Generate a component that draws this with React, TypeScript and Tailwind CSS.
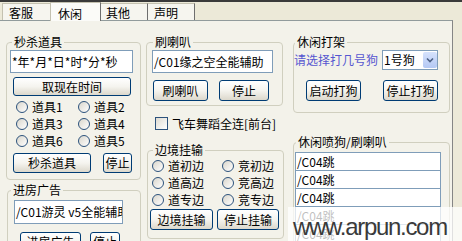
import React from 'react'

const font = "font-['Noto_Sans_CJK_SC',sans-serif]"

function Btn({ label, className }: { label: string; className: string }) {
  return (
    <button
      className={`flex shrink-0 items-center justify-center rounded-[3px] border border-[#003c74] bg-linear-to-b from-white via-[#f5f4ef] to-[#dcd8cc] text-[12px] leading-none text-black ${className}`}
    >
      {label}
    </button>
  )
}

function Radio({ label, className }: { label: string; className: string }) {
  return (
    <div className={`flex h-[17px] items-center ${className}`}>
      <span className="h-[12px] w-[12px] shrink-0 rounded-full border border-[#2c527c] bg-linear-to-br from-[#d9d6cc] to-white" />
      <span className="ml-[4px] text-[12px] leading-[17px] text-black">{label}</span>
    </div>
  )
}

function Group({ title, className, legendClass, children }: { title: string; className: string; legendClass: string; children: React.ReactNode }) {
  return (
    <fieldset className={`shrink-0 rounded-[4px] border border-[#d0cfbf] ${className}`}>
      <legend className={`px-[2px] text-[12px] leading-[14px] text-black ${legendClass}`}>{title}</legend>
      {children}
    </fieldset>
  )
}

function TextBox({ text, className }: { text: string; className: string }) {
  return (
    <div className={`flex items-center overflow-hidden whitespace-nowrap border border-[#7f9db9] bg-white pl-[1px] text-[12px] text-black ${className}`}>
      {text}
    </div>
  )
}

export default function App() {
  return (
    <div className={`relative h-[241px] w-[462px] overflow-hidden bg-[#ece9d8] ${font}`}>
      <div className="h-[2px] bg-[#3a3a3a]" />

      {/* Tabs */}
      <div className="relative z-10 flex h-[18px] items-end pl-[2px] text-[12px] text-black">
        <div className="h-[17px] w-[48px] border-l border-t border-[#c4c1b0] bg-[#f6f5ef] pl-[6px] pt-[2px] leading-[14px]">客服</div>
        <div className="-mb-px h-[19px] w-[51px] border-r border-t border-l border-[#c4c1b0] border-r-[#6e6e6e] bg-[#fbfbf8] pl-[7px] pt-[4px] leading-[14px]">休闲</div>
        <div className="h-[17px] w-[47px] border-r border-t border-[#c4c1b0] border-r-[#6e6e6e] bg-[#f6f5ef] pl-[5px] pt-[2px] leading-[14px]">其他</div>
        <div className="h-[17px] w-[47px] border-r border-t border-[#c4c1b0] border-r-[#6e6e6e] bg-[#f6f5ef] pl-[6px] pt-[2px] leading-[14px]">声明</div>
      </div>

      {/* Panel */}
      <div className="flex h-[221px] w-[453px] border-r border-t border-[#919b9c] border-r-[#858585] bg-[#f3f2ea] pl-[6px] pt-[14px]">
        {/* Column 1 */}
        <div className="flex w-[135px] shrink-0 flex-col">
          <Group title="秒杀道具" className="h-[145px] w-[135px]" legendClass="ml-[5px]">
            <TextBox text="*年*月*日*时*分*秒" className="ml-[3px] mt-[1px] h-[23px] w-[123px]" />
            <Btn label="取现在时间" className="ml-[6px] mt-[4px] h-[19px] w-[118px]" />
            <div className="ml-[9px] mt-[2px] grid grid-cols-[62px_auto]">
              <Radio label="道具1" className="" />
              <Radio label="道具2" className="" />
              <Radio label="道具3" className="" />
              <Radio label="道具4" className="" />
              <Radio label="道具6" className="" />
              <Radio label="道具5" className="" />
            </div>
            <div className="ml-[6px] mt-[4px] flex">
              <Btn label="秒杀道具" className="h-[20px] w-[78px]" />
              <Btn label="停止" className="ml-[12px] h-[20px] w-[29px]" />
            </div>
          </Group>
          <Group title="进房广告" className="ml-px mt-[3px] h-[70px] w-[134px]" legendClass="ml-[3px]">
            <TextBox text="/C01游灵 v5全能辅助" className="ml-[6px] mt-[3px] h-[24px] w-[109px]" />
            <div className="ml-[12px] mt-[8px] flex">
              <Btn label="进房广告" className="h-[20px] w-[61px]" />
              <Btn label="停止" className="ml-[9px] h-[20px] w-[30px]" />
            </div>
          </Group>
        </div>

        {/* Column 2 */}
        <div className="ml-[5px] flex w-[138px] shrink-0 flex-col">
          <Group title="刷喇叭" className="h-[71px] w-[137px]" legendClass="ml-[6px]">
            <TextBox text="/C01缘之空全能辅助" className="ml-[5px] mt-[1px] h-[23px] w-[121px]" />
            <div className="ml-[6px] mt-[7px] flex">
              <Btn label="刷喇叭" className="h-[21px] w-[55px]" />
              <Btn label="停止" className="ml-[11px] h-[21px] w-[50px]" />
            </div>
          </Group>
          <div className="ml-[9px] mt-[11px] flex h-[13px] items-center">
            <span className="h-[13px] w-[13px] shrink-0 border border-[#2c527c] bg-linear-to-br from-[#dedbd2] to-white" />
            <span className="ml-[4px] whitespace-nowrap text-[12px] leading-[13px] text-black">飞车舞蹈全连[前台]</span>
          </div>
          <Group title="边境挂输" className="ml-px mt-[13px] h-[96px] w-[137px]" legendClass="ml-[5px]">
            <div className="ml-[4px] grid grid-cols-[70px_auto]">
              <Radio label="道初边" className="" />
              <Radio label="竞初边" className="" />
              <Radio label="道高边" className="" />
              <Radio label="竞高边" className="" />
              <Radio label="道专边" className="" />
              <Radio label="竞专边" className="" />
            </div>
            <div className="ml-[2px] mt-px flex">
              <Btn label="边境挂输" className="h-[21px] w-[63px]" />
              <Btn label="停止挂输" className="ml-[4px] h-[21px] w-[62px]" />
            </div>
          </Group>
        </div>

        {/* Column 3 */}
        <div className="ml-[9px] flex w-[157px] shrink-0 flex-col">
          <Group title="休闲打架" className="h-[78px] w-[157px]" legendClass="ml-px">
            <div className="mt-px flex h-[20px] items-center">
              <span className="w-[84px] whitespace-nowrap text-[12px] leading-[20px] text-[#5656d0]">请选择打几号狗</span>
              <div className="ml-[4px] flex h-[20px] w-[56px] items-center justify-between border border-[#7f9db9] bg-white pl-px text-[12px] text-black">
                <span>1号狗</span>
                <span className="flex h-[16px] w-[14px] items-center justify-center rounded-[2px] bg-linear-to-b from-[#d6e2fc] to-[#b4c8f4]">
                  <svg width="8" height="6" viewBox="0 0 8 6">
                    <path d="M1 1.5 L4 4.5 L7 1.5" fill="none" stroke="#4d6185" strokeWidth="1.6" />
                  </svg>
                </span>
              </div>
            </div>
            <div className="ml-[12px] mt-[10px] flex">
              <Btn label="启动打狗" className="h-[21px] w-[55px]" />
              <Btn label="停止打狗" className="ml-[22px] h-[21px] w-[55px]" />
            </div>
          </Group>
          <Group title="休闲喷狗/刷喇叭" className="mt-[22px] h-[120px] w-[157px]" legendClass="ml-[2px]">
            <div className="ml-px mt-[3px] w-[146px] border border-b-0 border-[#7f9db9] bg-white">
              {[0, 1, 2, 3, 4].map((i) => (
                <div key={i} className="h-[18px] border-b border-[#7f9db9] pl-px text-[12px] leading-[17px] text-black">
                  /C04跳
                </div>
              ))}
            </div>
          </Group>
        </div>
      </div>

      {/* watermark */}
      <div className="absolute left-[288px] top-[207px] h-[34px] w-[174px] overflow-hidden bg-white/75">
        <div className="pl-[5px] font-['Liberation_Sans',sans-serif] text-[24px] leading-[40px] tracking-[-1.3px] text-[#3a3a3a]">
          www.arpun.com
        </div>
      </div>
    </div>
  )
}
